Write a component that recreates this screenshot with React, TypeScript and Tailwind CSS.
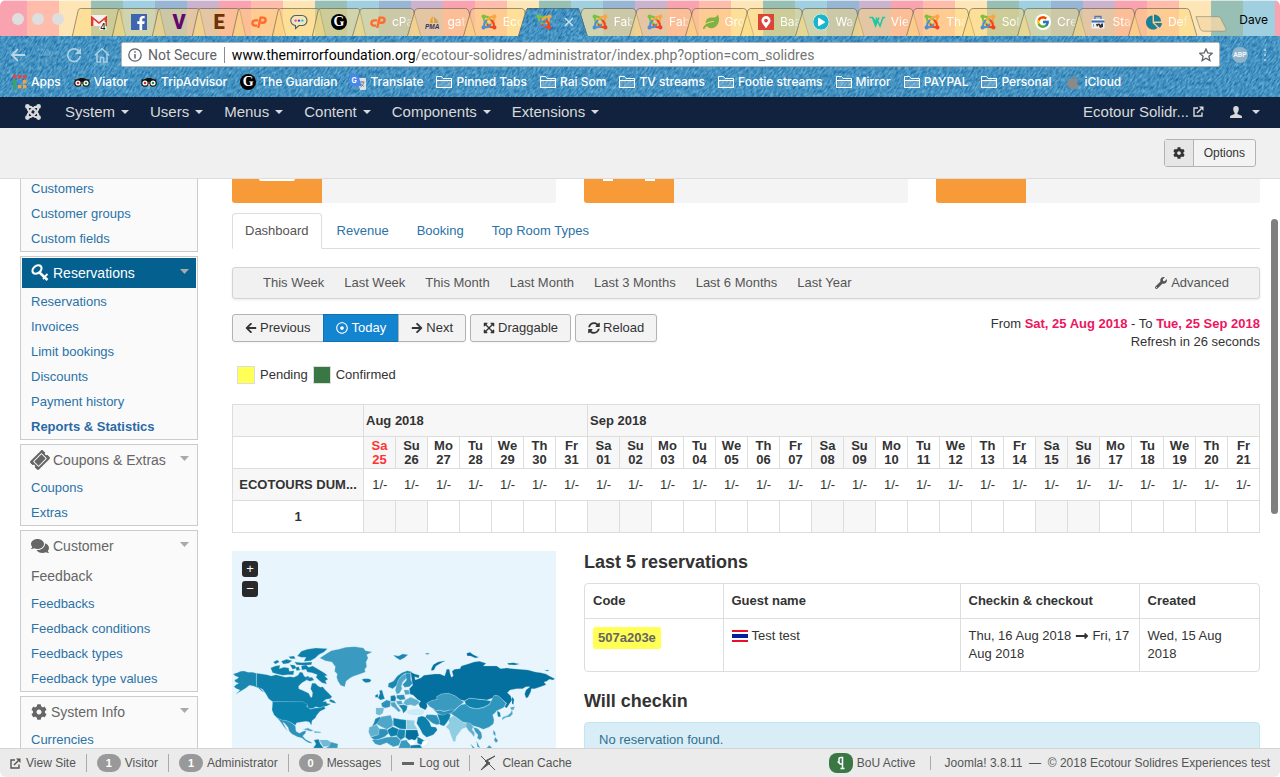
import React from "react";
import {
  FaApple,
  FaArrowLeft,
  FaArrowRight,
  FaChartPie,
  FaCog,
  FaComments,
  FaExpandArrowsAlt,
  FaFacebookF,
  FaLeaf,
  FaLongArrowAltRight,
  FaMapMarkerAlt,
  FaPlayCircle,
  FaRegDotCircle,
  FaSyncAlt,
  FaTicketAlt,
  FaWrench,
} from "react-icons/fa";
import { FcGoogle } from "react-icons/fc";

/* ---------- shared drawings ---------- */

function Denim({ id }: { id: string }) {
  return (
    <div className="absolute inset-0 overflow-hidden bg-[#4894c1]" aria-hidden="true">
      <svg className="-ml-10 h-full w-[calc(100%+80px)] -skew-x-[28deg]">
        <filter id={id} x="0" y="0" width="100%" height="100%" colorInterpolationFilters="sRGB">
          <feTurbulence type="fractalNoise" baseFrequency="0.55 0.26" numOctaves="2" seed="4" />
          <feColorMatrix values="0.55 0 0 0 -0.01  0.5 0 0 0 0.32  0.35 0 0 0 0.58  0 0 0 0 1" />
        </filter>
        <rect width="100%" height="100%" filter={`url(#${id})`} />
      </svg>
    </div>
  );
}

function JoomlaColor() {
  return (
    <svg viewBox="0 0 16 16" className="size-4" fill="none" strokeWidth="2.2" strokeLinecap="round">
      <path d="M3 4.5C2.6 7 4 7.6 5.2 8.8L9 12.6" stroke="#7ac143" />
      <path d="M4.6 2.6C7 2.4 8 4 9.4 5.4" stroke="#7ac143" />
      <path d="M13 4.6C13.4 7 12 7.8 10.8 9L7.5 12" stroke="#f9a541" />
      <path d="M11.4 2.8C9 2.4 8 4 6.8 5.2L4.4 7.4" stroke="#f9a541" />
      <path d="M12.8 11.4C13.4 9 12 8 10.6 6.6" stroke="#f44321" />
      <path d="M11.4 13.2C9 13.6 8 12.4 6.6 11" stroke="#f44321" />
      <path d="M3.2 11.4C2.6 9 4 8 5.2 6.8" stroke="#5091cd" />
      <path d="M4.6 13.2C7 13.6 8 12.2 9.2 11" stroke="#5091cd" />
      <circle cx="2.6" cy="2.6" r="1.2" fill="#7ac143" stroke="#7ac143" strokeWidth="1.8" />
      <circle cx="13.4" cy="2.6" r="1.2" fill="#f9a541" stroke="#f9a541" strokeWidth="1.8" />
      <circle cx="13.4" cy="13.4" r="1.2" fill="#f44321" stroke="#f44321" strokeWidth="1.8" />
      <circle cx="2.6" cy="13.4" r="1.2" fill="#5091cd" stroke="#5091cd" strokeWidth="1.8" />
    </svg>
  );
}

function JoomlaMark() {
  return (
    <svg viewBox="0 0 16 16" className="size-4 text-[#d9d9d9]" fill="none" stroke="currentColor" strokeWidth="2.1">
      <path d="M2.6 3C2.4 6.6 4 7.6 5 8.6L9 12.6M3 2.6C6.6 2.4 7.6 4 8.6 5L10 6.4" />
      <path d="M13.4 3C13.6 6.6 12 7.6 11 8.6L9.6 10M13 2.6C9.4 2.4 8.4 4 7.4 5L3.8 8.6" />
      <path d="M13.4 13C13.6 9.4 12 8.4 11 7.4L9.6 6M13 13.4C9.4 13.6 8.4 12 7.4 11L6 9.6" />
      <path d="M2.6 13C2.4 9.4 4 8.4 5 7.4L6.4 6M3 13.4C6.6 13.6 7.6 12 8.6 11L12 7.6" />
      <circle cx="2.4" cy="2.4" r="1.3" fill="currentColor" />
      <circle cx="13.6" cy="2.4" r="1.3" fill="currentColor" />
      <circle cx="13.6" cy="13.6" r="1.3" fill="currentColor" />
      <circle cx="2.4" cy="13.6" r="1.3" fill="currentColor" />
    </svg>
  );
}

function CpanelIcon() {
  return (
    <svg viewBox="0 0 16 12" className="h-3 w-4" fill="none" stroke="#ff6c2c" strokeWidth="2.4">
      <path d="M7.2 4.4H4.200C2.600 4.400 1.400 5.500 1.400 7s1 2.600 2.600 2.600H6" />
      <path d="M7.200 12L9.600 1.600H12c1.700 0 2.600 1 2.600 2.400S13.600 6.800 11.600 6.800H9.800" />
    </svg>
  );
}

function GuardianIcon() {
  return (
    <span className="flex size-4 items-center justify-center rounded-full bg-black font-['Liberation_Serif',serif] text-sm leading-4 font-bold text-white">
      G
    </span>
  );
}

function GmailIcon() {
  return (
    <svg viewBox="0 0 16 16" className="size-4">
      <path d="M0 1h16v11H0z" fill="#f6f1f0" />
      <path d="M0 12V1.6L8 8l8-6.4V12h-2.4V5.6L8 10 2.4 5.6V12z" fill="#dd3b32" />
      <text x="9" y="16" fontSize="9" fontFamily="Inter, sans-serif" stroke="#fff" strokeWidth="2" paintOrder="stroke">
        4
      </text>
    </svg>
  );
}

function ChatIcon() {
  return (
    <svg viewBox="0 0 18 16" className="h-4 w-[18px]">
      <path
        d="M6 1.5h6a5 5 0 0 1 0 10H9L5.500 14.500V11.500A5 5 0 0 1 6 1.500z"
        fill="#f5e6b8"
        stroke="#46606c"
        strokeWidth="1.100"
      />
      <circle cx="5.600" cy="6.600" r="1.200" fill="#f0439c" />
      <circle cx="9" cy="6.600" r="1.200" fill="#5533dd" />
      <circle cx="12.400" cy="6.600" r="1.200" fill="#22c7e0" />
    </svg>
  );
}

function PmaIcon() {
  return (
    <svg viewBox="0 0 16 16" className="size-4">
      <path d="M5 9C5 6 6 3.5 8 2.5c-.6 2-.5 4.500 0 6.500z" fill="#f89c0e" />
      <path d="M9 9c.5-3 0-5-1-6.500C11 4 13 6 13.500 9z" fill="#c9a35a" />
      <text x="0" y="15" fontSize="6.500" fontWeight="bold" fontStyle="italic" fontFamily="Liberation Sans, sans-serif" fill="#333366">
        PMA
      </text>
    </svg>
  );
}

function OwlIcon() {
  return (
    <svg viewBox="0 0 16 12" className="h-3 w-4">
      <path d="M1 4.500C4 1.500 12 1.500 15 4.500L12 9H4z" fill="#f5d9a0" />
      <path d="M0 3.500h3C6 1.600 10 1.600 13 3.500h3l-1.200 1.600L8 6 1.200 5.100z" fill="#111" />
      <circle cx="4" cy="7" r="3.800" fill="#111" />
      <circle cx="12" cy="7" r="3.800" fill="#111" />
      <circle cx="4" cy="7" r="2.600" fill="#fff" />
      <circle cx="12" cy="7" r="2.600" fill="#fff" />
      <circle cx="4" cy="7" r="1.300" fill="#d0302c" />
      <circle cx="12" cy="7" r="1.300" fill="#2c8c4c" />
      <path d="M7 8.500h2L8 11z" fill="#f5d9a0" />
    </svg>
  );
}

function AppsIcon() {
  const colors = ["#e8443a", "#e8443a", "#e8443a", "#34a853", "#4285f4", "#f2a33c", "#34a853", "#f2a33c", "#f2a33c"];
  return (
    <svg viewBox="0 0 14 14" className="size-3.5">
      {colors.map((color, i) => (
        <rect key={i} x={(i % 3) * 5} y={Math.floor(i / 3) * 5} width="3.500" height="3.500" fill={color} />
      ))}
    </svg>
  );
}

function TranslateIcon() {
  return (
    <svg viewBox="0 0 16 16" className="size-4">
      <path d="M7 4h8a1 1 0 0 1 1 1v10a1 1 0 0 1-1 1h-5z" fill="#dfe3e8" />
      <path d="M9.500 8h5M12 7v1M10.500 13c2-1 3-3 3-5M11 9.500c.5 1.500 2 2.500 3 3" stroke="#6b7780" fill="none" strokeWidth=".9" />
      <path d="M1 0h7l3.500 12H1a1 1 0 0 1-1-1V1a1 1 0 0 1 1-1z" fill="#4a86e8" />
      <text x="1.500" y="8.500" fontSize="7" fontWeight="bold" fontFamily="Inter, sans-serif" fill="#fff">
        G
      </text>
    </svg>
  );
}

function FolderIcon() {
  return (
    <svg viewBox="0 0 16 14" className="h-3.5 w-4" fill="none" stroke="#fff">
      <path d="M.5 12.500v-11h5l1.500 2h8.500v9z" />
      <path d="M.5 12.500V5.500h15v7z" fill="#fff" fillOpacity=".2" />
    </svg>
  );
}

function WaveIcon() {
  return (
    <svg viewBox="0 0 16 16" className="size-4" fill="none" stroke="#19c8a4" strokeWidth="1.500">
      <path d="M.5 3.500h3l3 8.500 3.500-8.500M3.500 3.500l3.200 4M7 3.500l4 8.500 3-8.500h2M5.500 10l3-5" />
    </svg>
  );
}

function BagIcon() {
  return (
    <svg viewBox="0 0 16 16" className="size-4">
      <path d="M5 5V2.500h6V5" fill="none" stroke="#4a78b8" strokeWidth="1.300" />
      <rect x="1.500" y="5" width="13" height="9.500" rx="1" fill="#eef1f5" />
      <rect x="1.500" y="6.500" width="13" height="2" fill="#3c6cb4" />
      <path d="M3.500 10v3" stroke="#9ab" />
      <path d="M6 10l1 3 1.500-2 1.500 3 3-1V9.500h-1.500l-1 1.500-1-1.500z" fill="#333" />
    </svg>
  );
}

function ExternalIcon() {
  return (
    <svg viewBox="0 0 11 11" className="size-[11px]" fill="none" stroke="currentColor" strokeWidth="1.400">
      <path d="M5 2H1v8h8V6.500" />
      <path d="M4 7l4.500-4.500" />
      <path d="M6 .5h4.500V5z" fill="currentColor" stroke="none" />
    </svg>
  );
}

function Caret() {
  return (
    <svg viewBox="0 0 8 4" className="ml-1.5 h-1 w-2" fill="currentColor">
      <path d="M0 0h8L4 4z" />
    </svg>
  );
}

function KeyIcon() {
  return (
    <svg viewBox="0 0 18 18" className="size-[18px]" fill="none" stroke="currentColor">
      <ellipse cx="6" cy="5.500" rx="5" ry="3.600" transform="rotate(-40 6 5.500)" strokeWidth="2.200" />
      <path d="M8.500 8.500l8 7.500" strokeWidth="2.500" />
      <path d="M14 12.500l2.500-2.500M12 15l2-2" strokeWidth="1.800" />
    </svg>
  );
}

/* ---------- browser chrome ---------- */

const pinnedTabs = [
  { name: "Gmail", icon: <GmailIcon /> },
  {
    name: "Facebook",
    icon: (
      <span className="flex size-4 items-end justify-center bg-[#4065b0] pl-1 text-white">
        <FaFacebookF className="size-3.5" />
      </span>
    ),
  },
  { name: "V", icon: <span className="font-['Roboto',sans-serif] text-xl leading-5 font-black text-[#65066e]">V</span> },
  { name: "E", icon: <span className="font-['Roboto',sans-serif] text-xl leading-5 font-black text-[#6b3407]">E</span> },
  { name: "cPanel", icon: <CpanelIcon /> },
  { name: "Chat", icon: <ChatIcon /> },
  { name: "The Guardian", icon: <GuardianIcon /> },
];

const tabs = [
  { title: "cPa", icon: <CpanelIcon /> },
  { title: "gat", icon: <PmaIcon /> },
  { title: "Eco", icon: <JoomlaColor /> },
  { title: "", icon: <JoomlaColor />, active: true },
  { title: "Fab", icon: <JoomlaColor /> },
  { title: "Fab", icon: <JoomlaColor /> },
  { title: "Gro", icon: <FaLeaf className="size-4 text-[#7cb342]" /> },
  {
    title: "Baa",
    icon: (
      <span className="flex size-4 items-center justify-center bg-[#db4437]">
        <FaMapMarkerAlt className="size-3 text-white" />
      </span>
    ),
  },
  { title: "Wa", icon: <FaPlayCircle className="size-4 rounded-full bg-white text-[#19b5cc]" /> },
  { title: "Vie", icon: <WaveIcon /> },
  { title: "Tha", icon: <JoomlaColor /> },
  { title: "Sol", icon: <JoomlaColor /> },
  {
    title: "Cre",
    icon: (
      <span className="flex size-4 items-center justify-center rounded-full bg-white">
        <FcGoogle className="size-3.5" />
      </span>
    ),
  },
  { title: "Sta", icon: <BagIcon /> },
  { title: "Def", icon: <FaChartPie className="size-4 text-[#1b7f96]" /> },
];

function TabShape({ active }: { active?: boolean }) {
  return (
    <span className="absolute inset-y-0 left-0 w-[calc(100%+14px)]">
      {active && (
        <span className="absolute inset-0 [clip-path:polygon(9px_0,calc(100%-9px)_0,100%_100%,0_100%)]">
          <Denim id="denim-tab" />
        </span>
      )}
      <svg viewBox="0 0 70 28" preserveAspectRatio="none" className="absolute inset-0 size-full">
        <path
          d="M.5 28L8 2.500Q9 .5 11 .5H59Q61 .5 62 2.500L69.500 28"
          fill={active ? "none" : "#fdd97c"}
          fillOpacity=".5"
          stroke="#5d5a50"
          strokeOpacity=".6"
          vectorEffect="non-scaling-stroke"
        />
      </svg>
    </span>
  );
}

function TabStrip() {
  return (
    <div className="flex h-9 items-end border-t border-white/60 bg-[repeating-linear-gradient(90deg,#f9a3b0_0_32px,#ffbcaa_32px_64px,#fde5b5_64px_96px,#98bfb3_96px_128px,#a0cfe0_128px_160px,#97b6d3_160px_192px,#cbb3ce_192px_224px)] bg-[position:-5px_0] pr-3">
      <div className="flex w-[72px] shrink-0 gap-2 self-center pl-3">
        <button aria-label="Close window" className="size-3 rounded-full bg-[#dedede]" />
        <button aria-label="Minimize window" className="size-3 rounded-full bg-[#dedede]" />
        <button aria-label="Zoom window" className="size-3 rounded-full bg-[#dedede]" />
      </div>
      {pinnedTabs.map((tab) => (
        <button key={tab.name} aria-label={tab.name} className="relative h-7 w-10 shrink-0">
          <TabShape />
          <span className="relative -mr-3.5 flex h-full items-center justify-center">{tab.icon}</span>
        </button>
      ))}
      {tabs.map((tab, i) => (
        <button key={i} className={tab.active ? "relative z-10 h-7 min-w-0 flex-1" : "relative h-7 min-w-0 flex-1"}>
          <TabShape active={tab.active} />
          <span className="relative -mr-3 flex h-full items-center gap-1.5 pl-[18px]">
            <span className="w-4 shrink-0">{tab.icon}</span>
            {tab.active ? (
              <svg viewBox="0 0 10 10" className="ml-1.5 size-2.5" stroke="#cfe2ec" strokeWidth="1.400">
                <path d="M1 1l8 8M9 1l-8 8" />
              </svg>
            ) : (
              <span className="w-6 shrink-0 text-left text-xs whitespace-nowrap text-white [mask-image:linear-gradient(90deg,#000_50%,transparent_90%)]">
                {tab.title}
              </span>
            )}
          </span>
        </button>
      ))}
      <button aria-label="New tab" className="ml-3 h-7 w-8 shrink-0">
        <svg viewBox="0 0 33 28" className="h-7 w-8">
          <path d="M1 8.500h23q2 0 2.600 2L32 21q.4 2.500-2 2.500H9q-2.500 0-3.500-2z" fill="#f5d9a8" fillOpacity=".8" stroke="#8f8a78" strokeOpacity=".7" />
        </svg>
      </button>
      <button className="ml-3 h-8 shrink-0 text-xs text-black">Dave</button>
    </div>
  );
}

const bookmarks = [
  { label: "Apps", icon: <AppsIcon /> },
  { label: "Viator", icon: <OwlIcon /> },
  { label: "TripAdvisor", icon: <OwlIcon /> },
  { label: "The Guardian", icon: <GuardianIcon /> },
  { label: "Translate", icon: <TranslateIcon /> },
  { label: "Pinned Tabs", icon: <FolderIcon /> },
  { label: "Rai Som", icon: <FolderIcon /> },
  { label: "TV streams", icon: <FolderIcon /> },
  { label: "Footie streams", icon: <FolderIcon /> },
  { label: "Mirror", icon: <FolderIcon /> },
  { label: "PAYPAL", icon: <FolderIcon /> },
  { label: "Personal", icon: <FolderIcon /> },
  { label: "iCloud", icon: <FaApple className="size-4 text-[#8a8a8a]" /> },
];

function BrowserToolbar() {
  return (
    <div className="relative">
      <Denim id="denim-bar" />
      <div className="relative flex items-center pt-1.5 pr-3 pl-2.5">
        <button aria-label="Back">
          <svg viewBox="0 0 16 16" className="size-4" fill="none" stroke="#b9d6e6" strokeWidth="1.800">
            <path d="M15 8H2M8 2L2 8l6 6" />
          </svg>
        </button>
        <button aria-label="Forward" className="ml-3 opacity-30">
          <svg viewBox="0 0 16 16" className="size-4" fill="none" stroke="#8fbdd8" strokeWidth="1.800">
            <path d="M1 8h13M8 2l6 6-6 6" />
          </svg>
        </button>
        <button aria-label="Reload page" className="ml-3">
          <svg viewBox="0 0 16 16" className="size-4" fill="none" stroke="#a9cfe3" strokeWidth="1.800">
            <path d="M13.500 5A6.300 6.300 0 1 0 14.300 9" />
            <path d="M15 1v6H9z" fill="#a9cfe3" stroke="none" />
          </svg>
        </button>
        <button aria-label="Home" className="ml-3">
          <svg viewBox="0 0 16 16" className="size-4" fill="none" stroke="#a9cfe3" strokeWidth="1.600">
            <path d="M.8 8.500L8 1.500l7.200 7M3 7v8h3.500v-4.500h3V15H13V7" />
          </svg>
        </button>
        <div className="ml-[11px] flex h-[25px] min-w-0 flex-1 items-center rounded-xs border border-[#b5b5b5] bg-white px-1.5 font-['Roboto',sans-serif] text-sm text-[#5f6368]">
          <svg viewBox="0 0 14 14" className="size-3.5 shrink-0" fill="none" stroke="#5f6368" strokeWidth="1.300">
            <circle cx="7" cy="7" r="6.200" />
            <path d="M7 6v4.500M7 3.300v1.500" strokeWidth="1.500" />
          </svg>
          <span className="ml-1.5 shrink-0">Not Secure</span>
          <span className="mx-[7px] h-4 w-px shrink-0 bg-[#8a8a8a]" />
          <label htmlFor="address" className="shrink-0 text-black">
            www.themirrorfoundation.org
          </label>
          <input
            id="address"
            type="text"
            defaultValue="/ecotour-solidres/administrator/index.php?option=com_solidres"
            className="min-w-0 flex-1 bg-transparent text-[#757575] outline-none"
          />
          <svg viewBox="0 0 14 14" className="size-3.5 shrink-0" fill="none" stroke="#5f6368" strokeWidth="1.300">
            <path d="M7 1l1.800 4 4.400.4-3.300 2.900 1 4.300L7 10.300l-3.900 2.300 1-4.300L.8 5.400 5.200 5z" />
          </svg>
        </div>
        <button
          aria-label="ABP"
          className="ml-3 flex size-4 items-center justify-center rounded-full bg-[#8fb4cb] font-['Roboto',sans-serif] text-[7px] font-bold text-[#eef5f9]"
        >
          ABP
        </button>
        <button aria-label="Browser menu" className="ml-4 flex w-1 flex-col gap-[3px]">
          <span className="size-0.5 bg-[#9cc8df]" />
          <span className="size-0.5 bg-[#9cc8df]" />
          <span className="size-0.5 bg-[#9cc8df]" />
        </button>
      </div>
      <nav className="relative flex h-[30px] items-center gap-[13px] pl-[13px]">
        {bookmarks.map((item) => (
          <a key={item.label} href="#" className="flex shrink-0 items-center gap-1 text-xs font-medium text-white">
            {item.icon}
            {item.label}
          </a>
        ))}
      </nav>
    </div>
  );
}

/* ---------- administrator page ---------- */

const menus = ["System", "Users", "Menus", "Content", "Components", "Extensions"];

function AdminBar() {
  return (
    <nav className="flex h-[31px] items-center bg-[#10223e] pr-5 pb-0.5 pl-[25px] text-[15px] text-[#d9d9d9]">
      <a href="#" aria-label="Joomla!" className="mr-6">
        <JoomlaMark />
      </a>
      <div className="flex flex-1 gap-[21px]">
        {menus.map((label) => (
          <button key={label} className="flex items-center">
            {label}
            <Caret />
          </button>
        ))}
      </div>
      <a href="#" className="flex items-center gap-1">
        Ecotour Solidr... <ExternalIcon />
      </a>
      <button aria-label="User menu" className="ml-[26px] flex items-center gap-1">
        <svg viewBox="0 0 12 12" className="size-3" fill="currentColor">
          <path d="M6 0c1.800 0 2.800 1.200 2.800 3S7.800 6.400 7.400 7v1L11 9.400c.7.300 1 .8 1 1.600v1H0v-1c0-.8.300-1.300 1-1.600L4.600 8V7C4.200 6.400 3.200 4.800 3.200 3S4.200 0 6 0z" />
        </svg>
        <Caret />
      </button>
    </nav>
  );
}

function SidePanel({
  title,
  icon,
  items,
  subheading,
  active,
}: {
  title: string;
  icon: React.ReactNode;
  items: string[];
  subheading?: string;
  active?: boolean;
}) {
  return (
    <section className="mt-1 border border-[#ccc] bg-[#fafafa]">
      <div className={active ? "p-px" : ""}>
        <button
          className={
            active
              ? "flex h-[30px] w-full items-center bg-[#04608f] pr-[7px] pl-[9px] text-sm text-white"
              : "flex h-[30px] w-full items-center px-2 pl-2.5 text-sm text-[#666]"
          }
        >
          {icon}
          <span className="ml-1 flex-1 text-left">{title}</span>
          <svg viewBox="0 0 9 5" className="mb-1 h-[5px] w-[9px]" fill="#a9a9a9">
            <path d="M0 0h9L4.500 5z" />
          </svg>
        </button>
      </div>
      {subheading && <h3 className="pl-2.5 text-sm leading-[30px] text-[#666]">{subheading}</h3>}
      <ul>
        {items.map((item) => (
          <li key={item}>
            <a
              href="#"
              className={
                item === "Reports & Statistics"
                  ? "block pl-2.5 leading-[25px] font-bold text-[#2a69a6]"
                  : "block pl-2.5 leading-[25px] text-[#2a72a8]"
              }
            >
              {item}
            </a>
          </li>
        ))}
      </ul>
    </section>
  );
}

function Sidebar() {
  return (
    <aside className="-mt-1 w-[178px] shrink-0">
      <ul className="border border-[#ccc] bg-[#fafafa]">
        {["Customers", "Customer groups", "Custom fields"].map((item) => (
          <li key={item}>
            <a href="#" className="block pl-2.5 leading-[25px] text-[#2a72a8]">
              {item}
            </a>
          </li>
        ))}
      </ul>
      <SidePanel
        title="Reservations"
        active
        icon={<KeyIcon />}
        items={["Reservations", "Invoices", "Limit bookings", "Discounts", "Payment history", "Reports & Statistics"]}
      />
      <SidePanel
        title="Coupons & Extras"
        icon={<FaTicketAlt className="size-[18px] -rotate-45" />}
        items={["Coupons", "Extras"]}
      />
      <SidePanel
        title="Customer"
        icon={<FaComments className="size-[18px]" />}
        subheading="Feedback"
        items={["Feedbacks", "Feedback conditions", "Feedback types", "Feedback type values"]}
      />
      <SidePanel title="System Info" icon={<FaCog className="size-4" />} items={["Currencies"]} />
    </aside>
  );
}

const days = ["Sa", "Su", "Mo", "Tu", "We", "Th", "Fr"];
const calendar = Array.from({ length: 28 }, (_, i) => ({
  day: days[i % 7],
  date: String(i < 7 ? 25 + i : i - 6).padStart(2, "0"),
  weekend: i % 7 < 2,
}));

function Timeline() {
  return (
    <table className="mt-5 w-full table-fixed border-collapse text-center">
      <colgroup>
        <col className="w-[131px]" />
        {calendar.map((c) => (
          <col key={c.date} />
        ))}
      </colgroup>
      <thead>
        <tr className="h-8 bg-[#f7f7f7] text-left">
          <th className="border border-[#ddd]" />
          <th colSpan={7} className="border border-[#ddd] px-0.5">
            Aug 2018
          </th>
          <th colSpan={21} className="border border-[#ddd] px-0.5">
            Sep 2018
          </th>
        </tr>
        <tr className="h-8 leading-[14px]">
          <th className="border border-[#ddd]" />
          {calendar.map((c, i) => (
            <th
              key={c.date}
              className={
                i === 0
                  ? "border border-[#ddd] bg-[#f7f7f7] p-0 text-[#f33]"
                  : c.weekend
                    ? "border border-[#ddd] bg-[#f7f7f7] p-0"
                    : "border border-[#ddd] p-0"
              }
            >
              {c.day}
              <br />
              {c.date}
            </th>
          ))}
        </tr>
      </thead>
      <tbody>
        <tr className="h-8 border border-[#ddd]">
          <th className="border border-[#ddd] bg-[#f7f7f7] p-0 whitespace-nowrap">ECOTOURS DUM...</th>
          {calendar.map((c) => (
            <td key={c.date} className="p-0">
              1/-
            </td>
          ))}
        </tr>
        <tr className="h-8">
          <th className="border border-[#ddd] p-0">1</th>
          {calendar.map((c) => (
            <td key={c.date} className={c.weekend ? "border border-[#ddd] bg-[#f7f7f7]" : "border border-[#ddd]"} />
          ))}
        </tr>
      </tbody>
    </table>
  );
}

// Land shapes, one entry per country or group of islands.
const land = [
  // Alaska
  { fill: "#1a87b0", d: "M40 402L52 398 62 394 72 393 84 397 98 397 109 400V438L120 444 132 456 126 454 114 443 100 438 88 436 78 444 68 450 54 458 48 462 60 450 50 446 42 440 48 434 56 430 46 426 44 420 52 416 56 412 46 408Z" },
  // Canada
  { fill: "#0d7fab", d: "M110 400L126 402 140 404 154 408 168 404 182 408 196 412 210 410 222 412 234 406 240 396 248 398 252 408 258 412 262 408 270 412 260 420 246 428 236 438 236 446 250 452 266 460 272 472 276 472 278 458 272 446 276 430 286 430 294 438 302 442 308 440 316 450 326 460 336 470 330 476 318 478 308 486 318 484 320 490 332 492 320 498 308 500 300 504 288 500 276 506 262 504 262 496 248 486 158 485 146 476 138 462 128 448 110 440Z" },
  { fill: "#0d7fab", d: "M330 478L342 482 348 490 338 488 328 484Z" },
  // Arctic islands
  { fill: "#0d7fab", d: "M232 348L244 334 262 328 288 324 322 326 312 336 296 344 286 354 272 362 252 364 258 352 244 352Z" },
  { fill: "#0d7fab", d: "M244 378L258 374 266 382 278 378 292 386 302 392 312 398 322 406 314 408 324 418 316 422 320 432 306 428 296 420 288 412 292 404 276 398 262 396 258 388 246 390Z" },
  { fill: "#0d7fab", d: "M152 384L166 378 180 376 178 386 192 382 206 384 208 394 222 392 220 404 204 404 188 406 172 402 158 398Z" },
  { fill: "#0d7fab", d: "M160 366L172 360 178 366 166 372ZM184 364L200 358 216 362 206 370 190 372ZM206 350L222 348 226 356 212 356ZM224 366L246 368 276 366 274 374 252 376 230 374ZM210 374L224 376 230 384 218 388ZM226 382L236 380 240 390 230 392ZM262 414L276 412 282 420 270 424 260 420Z" },
  // Greenland
  { fill: "#3a9ac0", d: "M300 354L318 342 334 332 356 328 378 322 404 320 430 324 436 332 456 336 440 344 444 354 438 366 440 380 434 388 436 396 420 402 402 408 390 414 378 424 374 440 362 436 354 424 350 412 352 402 344 394 346 380 336 366 316 362Z" },
  // Iceland
  { fill: "#0d7fab", d: "M426 418L434 416 446 416 454 420 450 426 438 428 430 424Z" },
  // USA
  { fill: "#0a82ae", d: "M158 485H248L262 492 260 500 272 508 286 504 300 504 312 498 316 506 300 514 290 526 286 534 276 542 274 556 268 546 258 544 244 546 230 548 226 556 214 548 200 542 184 540 172 534 162 524 156 510Z" },
  // Mexico
  { fill: "#2d92bb", d: "M172 534L184 540 200 542 214 548 226 558 228 574 238 580 250 574 258 572 256 580 248 588 256 598 264 602 272 606 276 610 266 608 256 602 246 594 232 590 216 582 208 574 204 562 194 550 188 546 196 562 202 572 192 560 182 546Z" },
  // Caribbean
  { fill: "#4fa6c9", d: "M250 568L264 564 280 572 272 574 258 570ZM282 574L304 576 300 578 284 578Z" },
  // South America
  { fill: "#0d7fab", d: "M282 600L296 598 300 610 310 624H280L288 612Z" },
  { fill: "#72b9d6", d: "M298 600L322 600 332 606 328 618 310 620 304 610Z" },
  { fill: "#3a9ac0", d: "M332 606L354 612 352 624H318L328 618Z" },
  // Svalbard and Arctic Russia
  { fill: "#1a87b0", d: "M520 346L536 348 548 342 564 344 552 354 540 360 530 354ZM616 340L628 340 626 343 618 343Z" },
  { fill: "#03709f", d: "M740 340L750 337 760 344 776 352 766 354 752 348 742 348ZM634 386L640 374 654 366 676 362 662 370 648 378 642 390 634 392ZM862 370L880 368 898 372 886 375 866 374ZM974 390L986 390 984 394Z" },
  // Norway, Sweden, Finland
  { fill: "#1a87b0", d: "M504 440L506 430 520 424 532 408 546 398 562 392 576 396 570 400 556 400 544 408 534 422 530 436 518 446Z" },
  { fill: "#4fa6c9", d: "M530 436L534 422 544 408 556 402 562 412 548 426 544 438 546 446 538 460 530 462 526 450Z" },
  { fill: "#2d92bb", d: "M556 400L572 400 572 418 578 430 568 440 554 442 548 434 560 420Z" },
  // Russia
  { fill: "#03709f", d: "M572 396L584 402 598 406 596 414 584 410 586 420 602 414 612 406 626 404 644 402 660 402 674 408 678 396 680 388 688 388 690 400 694 412 700 408 696 394 704 388 720 386 724 378 744 372 762 366 778 364 798 370 790 378 808 378 830 378 842 386 860 384 878 386 898 388 924 390 946 396 962 398 978 402 988 408 1004 416 1000 420 988 418 980 424 972 426 978 434 962 440 944 446 934 446 932 456 924 472 918 474 914 462 918 450 930 440 918 440 908 446 890 446 870 450 862 458 872 468 876 480 868 492 860 504 854 500 860 490 846 478 836 468 824 466 818 474 800 480 784 478 766 476 748 474 734 482 722 480 706 468 686 460 664 462 650 470 652 478 634 482 620 490 622 500 616 510 600 502 596 492 602 484 592 478 580 466 570 462 568 446 578 436Z" },
  { fill: "#03709f", d: "M876 470L882 478 880 494 876 490Z" },
  // Central Asia
  { fill: "#3a9ac0", d: "M620 490L634 482 652 478 650 470 664 462 686 460 706 468 722 480 732 486 722 494 712 502 704 510 688 510 672 514 660 510 648 512 640 506 630 500Z" },
  { fill: "#2d92bb", d: "M640 508L650 513 660 511 672 515 690 510 704 510 696 518 682 524 666 526 652 520Z" },
  // Mongolia
  { fill: "#1080ad", d: "M734 484L748 475 766 477 784 479 800 481 814 484 806 494 790 502 770 506 750 502 738 494Z" },
  // China
  { fill: "#2f97be", d: "M704 512L714 502 724 494 736 492 750 503 770 507 790 503 808 494 814 482 822 466 836 468 848 480 858 490 852 502 840 508 830 512 824 520 818 524 822 540 820 552 806 562 790 568 776 562 762 558 748 550 728 546 712 534 700 526 692 520Z" },
  // Korea and Japan
  { fill: "#0d7fab", d: "M832 512L840 518 842 530 834 530 832 520Z" },
  { fill: "#4fa6c9", d: "M872 502L884 500 880 510 872 508ZM876 510L878 522 870 530 858 532 846 540 848 532 864 526 872 518Z" },
  // India
  { fill: "#8fcde3", d: "M686 536L700 528 714 536 730 548 748 552 738 562 726 566 716 580 708 590 706 604 700 604 694 588 688 570 678 560 688 550Z" },
  // Southeast Asia
  { fill: "#62b0cf", d: "M740 548L752 550 760 560 756 568 764 580 762 590 754 580 746 572 738 560Z" },
  { fill: "#3a9ac0", d: "M760 562L774 566 784 578 786 592 780 600 772 594 774 584 766 576ZM770 604L776 616 780 624 772 620ZM820 570L826 578 826 588 820 582ZM826 592L834 602 828 608 822 600ZM800 624L808 616 816 624ZM752 612L764 624H758Z" },
  // Middle East
  { fill: "#2d92bb", d: "M620 524L636 524 650 526 656 538 660 552 650 554 638 550 626 540 616 532Z" },
  { fill: "#0d7fab", d: "M652 522L668 526 684 520 692 524 688 536 680 548 672 558 660 554 658 540ZM594 532L606 528 616 532 628 546 634 560 648 562 652 570 640 584 620 592 608 582 600 566 590 550Z" },
  { fill: "#c9eefb", d: "M560 516L574 510 596 508 612 512 608 522 590 524 568 522Z" },
  // Europe
  { fill: "#0d7fab", d: "M474 474L480 460 478 452 486 450 490 464 494 476 482 480ZM466 466L474 462 474 472 466 472ZM512 468L524 466 528 474 526 484 512 484Z" },
  { fill: "#2d92bb", d: "M484 490L500 480 512 484 510 500 496 504 486 500ZM530 466L552 464 556 478 540 480 530 474Z" },
  { fill: "#72b9d6", d: "M468 504L492 504 488 520 478 526 468 522Z" },
  { fill: "#4fa6c9", d: "M512 488L524 486 532 500 542 512 536 516 524 504 514 498ZM552 450L566 450 570 462 556 464ZM528 484L544 482 548 492 534 494Z" },
  { fill: "#62b0cf", d: "M556 480L572 472 592 480 600 488 584 498 572 494 560 496 550 490Z" },
  { fill: "#1a87b0", d: "M536 496L552 494 562 498 560 510 550 520 546 508Z" },
  // North Africa
  { fill: "#1a87b0", d: "M466 536L480 530 484 538 470 552 456 560 462 548Z" },
  { fill: "#4fa6c9", d: "M484 530L512 526 518 544 518 558 500 568 484 560 470 552Z" },
  { fill: "#0d7fab", d: "M520 534L540 538 558 540 558 568 540 566 520 556Z" },
  { fill: "#8fcde3", d: "M560 540L584 542 582 552 592 568H560Z" },
  { fill: "#62b0cf", d: "M448 562L470 554 478 566 476 584 452 590 446 576Z" },
  { fill: "#2d92bb", d: "M478 566L500 568 506 580 494 590 480 596 464 600 452 592 476 584Z" },
  { fill: "#0d7fab", d: "M502 570L518 560 536 568 532 586 512 590 506 580Z" },
  { fill: "#1a87b0", d: "M536 568L556 570 554 592 542 600 530 588Z" },
  { fill: "#03709f", d: "M558 570L592 570 596 586 586 600 566 600 556 592Z" },
  { fill: "#3a9ac0", d: "M456 600L480 598 500 592 530 590 542 602 536 616 520 620 500 608 480 616 466 612ZM544 602L560 600 572 614 570 624H536Z" },
  { fill: "#0d7fab", d: "M592 590L604 596 616 604 604 614 592 610ZM572 616L600 614 606 624H570Z" },
  { fill: "#ffffff", d: "M560 602L576 598 586 604 584 614 572 616ZM608 604L628 598 622 612 610 620 604 616Z" },
];

function WorldMap() {
  return (
    <div className="relative h-full bg-[#e8f5fc]">
      <svg viewBox="36 33 972 591" className="block w-full">
        {land.map((shape) => (
          <path key={shape.d} d={shape.d} fill={shape.fill} stroke="#a5d3e6" strokeWidth=".8" />
        ))}
      </svg>
      <div className="absolute top-2.5 left-2.5 flex flex-col gap-1">
        {["+", "−"].map((sign) => (
          <button key={sign} className="size-4 rounded-[3px] bg-[#292929] text-[13px] leading-4 text-white">
            {sign}
          </button>
        ))}
      </div>
    </div>
  );
}

function Reservations() {
  return (
    <div>
      <h2 className="text-lg leading-[22px] font-bold">Last 5 reservations</h2>
      <div className="mt-2.5 rounded border border-[#ddd]">
        <table className="w-full table-fixed text-left leading-[18px]">
          <colgroup>
            <col className="w-[138px]" />
            <col />
            <col className="w-[179px]" />
            <col className="w-[120px]" />
          </colgroup>
          <thead>
            <tr>
              <th className="p-2">Code</th>
              <th className="border-l border-[#ddd] p-2">Guest name</th>
              <th className="border-l border-[#ddd] p-2">Checkin &amp; checkout</th>
              <th className="border-l border-[#ddd] p-2">Created</th>
            </tr>
          </thead>
          <tbody className="align-top">
            <tr>
              <td className="border-t border-[#ddd] p-2">
                <a href="#" className="inline-block rounded-xs bg-[#ffff55] px-[5px] py-0.5 font-bold text-[#666]">
                  507a203e
                </a>
              </td>
              <td className="border-t border-l border-[#ddd] p-2">
                <span className="flex items-center gap-1">
                  <svg viewBox="0 0 16 12" className="h-3 w-4">
                    <path d="M0 0h16v12H0z" fill="#e8112d" />
                    <path d="M0 2h16v8H0z" fill="#fff" />
                    <path d="M0 4h16v4H0z" fill="#00209f" />
                  </svg>
                  Test test
                </span>
              </td>
              <td className="border-t border-l border-[#ddd] p-2">
                Thu, 16 Aug 2018 <FaLongArrowAltRight className="inline size-3.5 align-text-bottom" /> Fri, 17 Aug 2018
              </td>
              <td className="border-t border-l border-[#ddd] p-2">Wed, 15 Aug 2018</td>
            </tr>
          </tbody>
        </table>
      </div>
      <h2 className="mt-[18px] text-lg leading-[22px] font-bold">Will checkin</h2>
      <p className="mt-2.5 rounded border border-[#bce8f1] bg-[#d9edf7] px-3.5 py-2 leading-[18px] text-[#31708f]">
        No reservation found.
      </p>
    </div>
  );
}

const buttonClass =
  "flex h-7 items-center gap-[3px] border border-[#b3b3b3] bg-[#f3f3f3] px-3 shadow-[0_1px_2px_rgba(0,0,0,0.05)]";

function Dashboard() {
  return (
    <div className="min-w-0 flex-1">
      <div className="grid grid-cols-3 gap-7">
        {["w-9", "w-12", "w-0"].map((mark) => (
          <div key={mark} className="flex h-6 overflow-hidden rounded-b-[3px] bg-[#f4f4f4]">
            <div className="flex w-[90px] justify-center bg-[#f79a38]">
              <span
                className={
                  mark === "w-12"
                    ? "flex h-0.5 w-[52px] justify-between border-x-[10px] border-white"
                    : `${mark} h-0.5 rounded-b bg-white`
                }
              />
            </div>
          </div>
        ))}
      </div>

      <div role="tablist" className="mt-2.5 flex gap-0.5 border-b border-[#ddd]">
        <button
          role="tab"
          aria-selected="true"
          className="-mb-px h-9 rounded-t border border-b-white border-[#ddd] bg-white px-3 text-[#555]"
        >
          Dashboard
        </button>
        {["Revenue", "Booking", "Top Room Types"].map((label) => (
          <button key={label} role="tab" className="h-[35px] border-x border-transparent px-3 text-[#2a72a8]">
            {label}
          </button>
        ))}
      </div>

      <div className="mt-[18px] flex h-8 items-center gap-5 rounded-[3px] border border-[#d4d4d4] bg-[#f1f1f1] px-[30px] text-[#555] shadow-[0_1px_3px_rgba(0,0,0,0.08)]">
        {["This Week", "Last Week", "This Month", "Last Month", "Last 3 Months", "Last 6 Months", "Last Year"].map(
          (label) => (
            <a key={label} href="#">
              {label}
            </a>
          ),
        )}
        <a href="#" className="ml-auto flex items-center gap-1">
          <FaWrench className="size-3" />
          Advanced
        </a>
      </div>

      <div className="mt-[15px] flex items-start justify-between">
        <div className="flex">
          <button className={`${buttonClass} rounded-l-[3px]`}>
            <FaArrowLeft className="size-3" /> Previous
          </button>
          <button className="-ml-px flex h-7 items-center gap-1 border border-[#1072b5] bg-[#1384d0] px-3 text-white">
            <FaRegDotCircle className="size-3" /> Today
          </button>
          <button className={`${buttonClass} -ml-px rounded-r-[3px]`}>
            <FaArrowRight className="size-3" /> Next
          </button>
          <button className={`${buttonClass} ml-1 rounded-[3px]`}>
            <FaExpandArrowsAlt className="size-3" /> Draggable
          </button>
          <button className={`${buttonClass} ml-1 rounded-[3px]`}>
            <FaSyncAlt className="size-3" /> Reload
          </button>
        </div>
        <p className="pt-px text-right leading-[18px]">
          From <b className="text-[#ee1560]">Sat, 25 Aug 2018</b> - To <b className="text-[#ee1560]">Tue, 25 Sep 2018</b>
          <br />
          Refresh in 26 seconds
        </p>
      </div>

      <div className="mt-[15px] flex h-[18px] items-center gap-[5px] pl-[5px]">
        <span className="size-[18px] border border-[#ddd] bg-[#ffff55]" />
        Pending
        <span className="size-[18px] border border-[#ddd] bg-[#397745]" />
        Confirmed
      </div>

      <Timeline />

      <div className="mt-[18px] grid grid-cols-3 gap-7">
        <WorldMap />
        <div className="col-span-2">
          <Reservations />
        </div>
      </div>
    </div>
  );
}

function CountBadge({ count, label }: { count: number; label: string }) {
  return (
    <a href="#" className="flex items-center gap-1 border-l border-[#aaa] pl-2.5">
      <span className="flex h-[18px] w-6 items-center justify-center rounded-full bg-[#999] text-[11px] font-bold text-white">
        {count}
      </span>
      {label}
    </a>
  );
}

function StatusBar() {
  return (
    <footer className="flex h-[29px] shrink-0 items-center justify-between border-t border-[#d4d4d4] bg-[#ebebeb] px-2.5 text-xs leading-4 text-[#555]">
      <div className="flex items-center gap-2.5">
        <a href="#" className="flex items-center gap-[5px]">
          <ExternalIcon />
          View Site
        </a>
        <CountBadge count={1} label="Visitor" />
        <CountBadge count={1} label="Administrator" />
        <CountBadge count={0} label="Messages" />
        <a href="#" className="flex items-center gap-[5px] border-l border-[#aaa] pl-2.5">
          <span className="h-[3px] w-3 bg-[#666]" />
          Log out
        </a>
        <a href="#" className="flex items-center gap-1.5 border-l border-[#aaa] pl-2.5">
          <svg viewBox="0 0 16 16" className="size-4" fill="none" stroke="#555">
            <path d="M1 1l14 14" strokeWidth="1" />
            <path d="M15 1L7 6l3 2-9 7 6-7-2-2z" fill="#555" />
          </svg>
          Clean Cache
        </a>
      </div>
      <div className="flex items-center">
        <span className="mr-1 flex h-5 w-6 items-center justify-center rounded-lg bg-[#397745]">
          <svg viewBox="0 0 10 14" className="h-3.5 w-2.5" fill="none" stroke="#fff" strokeWidth="1.500">
            <path d="M5 1.500h1.500V12.500M4.500 12.500h4M5 1.500Q3 1.500 3 3v3q0 2 2 2h1.500M1.500 6h2" />
          </svg>
        </span>
        BoU Active
        <span className="mx-3.5 h-3.5 w-px bg-[#aaa]" />
        <span>Joomla! 3.8.11 &nbsp;—&nbsp; © 2018 Ecotour Solidres Experiences test</span>
      </div>
    </footer>
  );
}

export default function App() {
  return (
    <div className="relative flex h-screen flex-col overflow-hidden rounded-md bg-white font-['Liberation_Sans',Arial,sans-serif] text-[13px] leading-[18px] text-[#333]">
      <header className="shrink-0 font-['Inter',sans-serif]">
        <TabStrip />
        <BrowserToolbar />
      </header>
      <AdminBar />
      <div className="flex h-[51px] shrink-0 items-center justify-end border-b border-[#ddd] bg-[#f0f0f0] px-6">
        <button className="flex h-7 items-center rounded-[3px] border border-[#b3b3b3] bg-[#f3f3f3] text-xs">
          <span className="flex h-full w-[29px] items-center justify-center border-r border-[#b3b3b3] bg-[#e6e6e6]">
            <FaCog className="size-3" />
          </span>
          <span className="px-2.5">Options</span>
        </button>
      </div>
      <main className="flex min-h-0 flex-1 gap-[34px] overflow-hidden px-5">
        <Sidebar />
        <Dashboard />
      </main>
      <StatusBar />
      <div className="absolute top-[219px] right-0.5 h-[295px] w-[7px] rounded-full bg-[#7f7f7f]" />
    </div>
  );
}
